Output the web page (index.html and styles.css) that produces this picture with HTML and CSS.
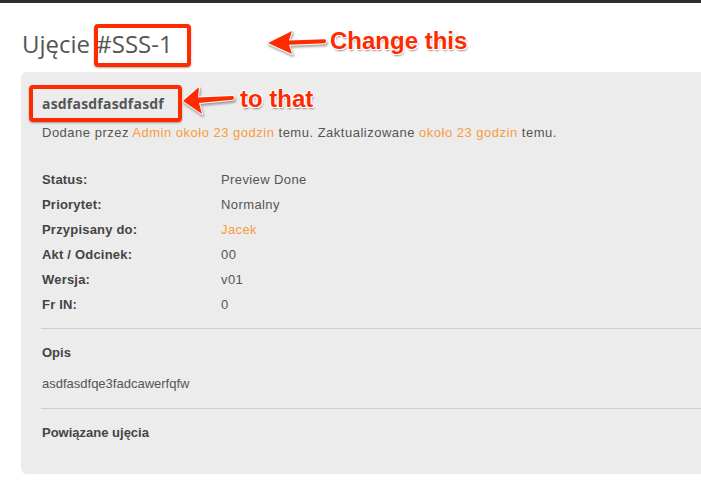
FILE: index.html
```html
<!DOCTYPE html>
<html lang="pl">
<head>
    <meta charset="UTF-8">
    <meta name="viewport" content="width=device-width, initial-scale=1.0">
    <title>Ujęcie #SSS-1</title>
    <link rel="stylesheet" href="styles.css">
</head>
<body>
    <div class="top-menu"></div>

    <div class="content">
        <h2 class="title">Ujęcie #SSS-1</h2>

        <div class="issue">
            <h3 class="subject">asdfasdfasdfasdf</h3>
            <p class="author">Dodane przez <a href="#">Admin</a> <a href="#">około 23 godzin</a> temu. Zaktualizowane <a href="#">około 23 godzin</a> temu.</p>

            <div class="attributes">
                <div class="attr-label">Status:</div><div class="attr-value">Preview Done</div>
                <div class="attr-label">Priorytet:</div><div class="attr-value">Normalny</div>
                <div class="attr-label">Przypisany do:</div><div class="attr-value"><a href="#">Jacek</a></div>
                <div class="attr-label">Akt / Odcinek:</div><div class="attr-value">00</div>
                <div class="attr-label">Wersja:</div><div class="attr-value">v01</div>
                <div class="attr-label">Fr IN:</div><div class="attr-value">0</div>
            </div>

            <hr>
            <div class="section-title">Opis</div>
            <div class="description">asdfasdfqe3fadcawerfqfw</div>

            <hr>
            <div class="section-title related">Powiązane ujęcia</div>
        </div>
    </div>

    <!-- screenshot annotations -->
    <div class="mark mark-title"></div>
    <div class="mark mark-subject"></div>

    <svg class="arrow arrow-title" width="72" height="40" viewBox="0 0 72 40">
        <path d="M8 23 L32 11 L29 20.5 L65 19.3 Q67 21.2 65 23.2 L29 24.8 L32 34 Z"/>
    </svg>
    <svg class="arrow arrow-subject" width="62" height="40" viewBox="0 0 62 40">
        <path d="M5 21 L21 7 L20 17.5 L55 16 Q57 17.8 55 19.8 L21 23 L24 34 Z"/>
    </svg>

    <div class="note note-title">Change this</div>
    <div class="note note-subject">to that</div>
</body>
</html>
```

FILE: styles.css
```css
body {
    margin: 0;
    font-family: "Liberation Sans", Arial, sans-serif;
    font-size: 13px;
    color: #444;
    background-color: #fff;
    overflow: hidden;
    position: relative;
    height: 489px;
}
a {
    color: #f99b3e;
    text-decoration: none;
}
.top-menu {
    height: 3px;
    background-color: #2e2e2e;
}
.content {
    padding-left: 21px;
}
.title {
    font-family: "Open Sans", "Liberation Sans", sans-serif;
    font-weight: normal;
    font-size: 24px;
    line-height: 30px;
    color: #555;
    margin: 26px 0 13px 1px;
}
.issue {
    background-color: #ececec;
    border-radius: 6px;
    padding: 22px 0 32px 21px;
    margin-right: -30px;
}
.subject {
    font-family: "Open Sans", "Liberation Sans", sans-serif;
    font-size: 14px;
    font-weight: bold;
    line-height: 20px;
    color: #555;
    margin: 0;
    letter-spacing: 0.2px;
}
.author {
    margin: 10px 0 0;
    line-height: 18px;
    color: #555;
    letter-spacing: 0.5px;
}
.attributes {
    display: grid;
    grid-template-columns: 179px 1fr;
    margin-top: 25px;
    line-height: 25px;
}
.attr-label {
    font-weight: bold;
    color: #444;
    letter-spacing: 0.2px;
}
.attr-value {
    color: #555;
    letter-spacing: 0.4px;
}
.issue hr {
    border: 0;
    border-top: 1px solid #cdcdcd;
    height: 0;
    margin: 11px 0 0 -1px;
}
.issue hr + .section-title {
    margin-top: 15px;
}
.description + hr {
    margin-top: 15px !important;
}
.section-title {
    font-weight: bold;
    line-height: 18px;
    color: #444;
}
.description {
    margin-top: 13px;
    line-height: 18px;
    color: #555;
}

/* annotations laid over the screenshot */
.mark {
    position: absolute;
    border: 4px solid #ff2a00;
    border-radius: 4px;
    box-shadow: 0 1px 2px rgba(0,0,0,0.35);
}
.mark-title {
    left: 94px;
    top: 24px;
    width: 89px;
    height: 35px;
}
.mark-subject {
    left: 29px;
    top: 85px;
    width: 145px;
    height: 29px;
}
.arrow {
    position: absolute;
    overflow: visible;
    filter: drop-shadow(1px 2px 1px rgba(0,0,0,0.35));
}
.arrow path {
    fill: #ff2a00;
    stroke: #fff;
    stroke-width: 2px;
    stroke-linejoin: round;
    paint-order: stroke;
}
.arrow-title {
    left: 260px;
    top: 20px;
}
.arrow-subject {
    left: 178px;
    top: 80px;
}
.note {
    position: absolute;
    font-family: "Liberation Sans", Arial, sans-serif;
    font-weight: bold;
    font-size: 24px;
    line-height: 24px;
    color: #ff2a00;
    white-space: nowrap;
    text-shadow: 1px 0 0 #fff, -1px 0 0 #fff, 0 1px 0 #fff, 0 -1px 0 #fff,
                 1px 1px 0 #fff, -1px -1px 0 #fff, 1px -1px 0 #fff, -1px 1px 0 #fff,
                 1px 2px 2px rgba(0,0,0,0.45);
}
.note-title {
    left: 330px;
    top: 29px;
}
.note-subject {
    left: 240px;
    top: 87px;
}
```
